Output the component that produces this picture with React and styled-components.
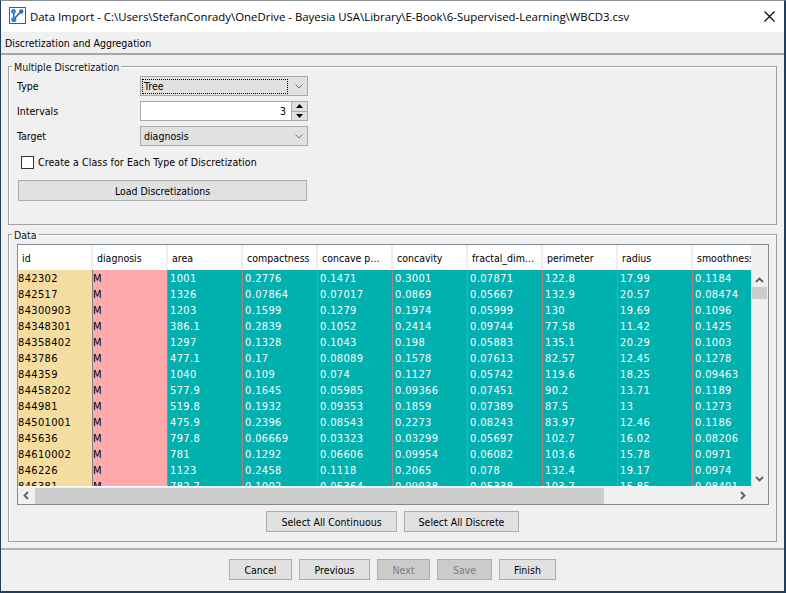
import React from "react";
import styled, { createGlobalStyle } from "styled-components";

const Global = createGlobalStyle`
  html, body { margin: 0; padding: 0; width: 786px; height: 593px; overflow: hidden; background: #f0f0f0; }
  * { box-sizing: border-box; }
`;
const font = `"Open Sans", "Liberation Sans", Arial, sans-serif`;
const uiFont = `"DejaVu Sans Condensed", "Liberation Sans", Arial, sans-serif`;

const Win = styled.div`
  width: 786px; height: 593px; display: flex; flex-direction: column;
  background: #f0f0f0; border: 1px solid #2b4a66; border-width: 1px 2px 2px 1px;
  border-color: #8a8f94 #1f3f5c #1f3f5c #1f3f5c;
  font-family: ${uiFont}; font-size: 10.5px; color: #000;
`;
const TitleBar = styled.div`
  height: 31px; background: #fff; display: flex; align-items: center; padding: 0 9px 0 8px; flex: none;
`;
const IconSlot = styled.div`display: flex; margin-bottom: 2px;`;
const TitleText = styled.div`
  font-family: ${font}; font-size: 11.4px; margin-left: 4px; flex: 1; white-space: nowrap; color: #000;
`;
const TabTitle = styled.div`
  height: 23px; flex: none; display: flex; align-items: center; padding: 1px 0 0 4px;
  border-bottom: 2px solid #a6a6a6;
`;
const Content = styled.div`
  flex: 1; padding: 5px 7px 0 7px; display: flex; flex-direction: column; gap: 3px;
`;
const Group = styled.fieldset`
  margin: 0; padding: 0; border: 1px solid #a0a0a0; box-shadow: inset 1px 1px 0 #fff;
  height: ${p => p.$h}px; min-width: 0; flex: none;
`;
const Legend = styled.legend`
  padding: 0 2px; margin-left: 3px; line-height: 12px; color: #111; position: relative; top: 1px;
`;
const Form = styled.div`
  padding: 4px 8px 0 8px; width: 310px;
`;
const FormRow = styled.div`
  display: grid; grid-template-columns: 123px 168px; align-items: center; height: 20px; margin-bottom: 5px;
`;
const Label = styled.div``;
const Combo = styled.div`
  height: 20px; border: 1px solid #a8a8a8; background: #e1e1e1; display: flex; align-items: center;
  justify-content: space-between; padding: 0 4px 0 1px;
`;
const ComboValue = styled.div`
  flex: 1; margin-right: 7px; height: 15px; line-height: 13px; padding-left: 1px;
  border: 1px dotted ${p => p.$focus ? "#000" : "transparent"};
`;
const Spinner = styled.div`
  height: 20px; border: 1px solid #a8a8a8; background: #fff; display: flex; justify-content: flex-end; align-items: stretch;
`;
const SpinValue = styled.div`flex: 1; text-align: right; padding-right: 5px; line-height: 18px;`;
const SpinBtns = styled.div`
  width: 16px; background: #e1e1e1; border-left: 1px solid #a8a8a8; display: flex; flex-direction: column;
  > div { flex: 1; display: flex; align-items: center; justify-content: center; }
  > div + div { border-top: 1px solid #a8a8a8; }
`;
const CheckRow = styled.div`
  display: flex; align-items: center; gap: 4px; height: 16px; margin: 8px 0 0 4px; letter-spacing: 0.1px; white-space: nowrap;
`;
const CheckBox = styled.div`width: 13px; height: 13px; border: 1px solid #333; background: #fff;`;
const Button = styled.div`
  height: 21px; width: ${p => p.$w}px; border: 1px solid #adadad;
  background: ${p => p.$disabled ? "#cbcbcb" : "#e1e1e1"}; color: ${p => p.$disabled ? "#7d7d7d" : "#000"};
  display: flex; align-items: center; justify-content: center; flex: none;
`;
const LoadWrap = styled.div`margin-top: 10px; margin-left: 1px;`;
const TableFrame = styled.div`
  margin: 4px 7px 0 8px; height: 261px; border: 1px solid #7f8a94;
  display: grid; grid-template-columns: 733px 17px; grid-template-rows: 25px 217px 17px; background: #f0f0f0;
`;
const HeaderRow = styled.div`
  display: flex; overflow: hidden; background: #fff; grid-column: 1;
`;
const HeaderCell = styled.div`
  flex: 0 0 75px; padding: 1px 0 0 4px; border-right: 2px solid #eeeeee; line-height: 24px; white-space: nowrap; overflow: hidden;
`;
const Corner = styled.div`background: #f0f0f0;`;
const Body = styled.div`overflow: hidden; grid-column: 1; border-bottom: 1px solid #fff;`;
const Row = styled.div`display: flex; height: 16px;`;
const Cell = styled.div`
  flex: 0 0 75px; height: 16px; line-height: 17px; font-size: 11px; letter-spacing: 0.35px; white-space: nowrap; overflow: hidden;
  padding-left: ${p => p.$kind === "num" ? 2 : 0}px;
  background: ${p => p.$kind === "id" ? "#f5dc9f" : p.$kind === "cat" ? "#ffa9ac" : "#00b1b0"};
  color: ${p => p.$kind === "num" ? "#fff" : "#000"};
  border-right: 1px solid ${p => p.$kind === "id" ? "#80808a" : "#b07f80"};
`;
const VBar = styled.div`
  grid-column: 2; grid-row: 2; background: #f0f0f0; display: flex; flex-direction: column; align-items: center; padding: 7px 0 5px;
`;
const VThumb = styled.div`width: 15px; height: 12px; background: #cdcdcd; margin-top: 4px;`;
const Spacer = styled.div`flex: 1;`;
const HBar = styled.div`
  grid-column: 1 / span 1; grid-row: 3; background: #f0f0f0; display: flex; align-items: center; padding: 0 5px;
`;
const HThumb = styled.div`width: 569px; height: 16px; background: #cdcdcd; margin-left: 6px;`;
const CenterButtons = styled.div`
  display: flex; justify-content: center; gap: 7px; margin-top: 6px;
`;
const Footer = styled.div`
  flex: none; height: 44px; border-top: 2px solid #b0b0b0; margin-top: 6px; display: flex; justify-content: center; align-items: center; gap: 7px;
  padding-bottom: 3px;
`;

const Chev = ({ d, w = 8, h = 5, c = "#707070", sw = 1 }) => (
  <svg width={w} height={h} viewBox={`0 0 ${w} ${h}`} fill="none"><path d={d} stroke={c} strokeWidth={sw} /></svg>
);
const Tri = ({ up }) => (
  <svg width="7" height="4" viewBox="0 0 7 4"><path d={up ? "M3.5 0L7 4H0Z" : "M0 0H7L3.5 4Z"} fill="#000" /></svg>
);

const headers = ["id","diagnosis","area","compactness","concave p…","concavity","fractal_dim…","perimeter","radius","smoothness"];
const rows = `842302 M 1001 0.2776 0.1471 0.3001 0.07871 122.8 17.99 0.1184
842517 M 1326 0.07864 0.07017 0.0869 0.05667 132.9 20.57 0.08474
84300903 M 1203 0.1599 0.1279 0.1974 0.05999 130 19.69 0.1096
84348301 M 386.1 0.2839 0.1052 0.2414 0.09744 77.58 11.42 0.1425
84358402 M 1297 0.1328 0.1043 0.198 0.05883 135.1 20.29 0.1003
843786 M 477.1 0.17 0.08089 0.1578 0.07613 82.57 12.45 0.1278
844359 M 1040 0.109 0.074 0.1127 0.05742 119.6 18.25 0.09463
84458202 M 577.9 0.1645 0.05985 0.09366 0.07451 90.2 13.71 0.1189
844981 M 519.8 0.1932 0.09353 0.1859 0.07389 87.5 13 0.1273
84501001 M 475.9 0.2396 0.08543 0.2273 0.08243 83.97 12.46 0.1186
845636 M 797.8 0.06669 0.03323 0.03299 0.05697 102.7 16.02 0.08206
84610002 M 781 0.1292 0.06606 0.09954 0.06082 103.6 15.78 0.0971
846226 M 1123 0.2458 0.1118 0.2065 0.078 132.4 19.17 0.0974
846381 M 782.7 0.1002 0.05364 0.09938 0.05338 103.7 15.85 0.08401`.split("\n").map(r => r.split(" "));

const AppIcon = () => (
  <svg width="17" height="17" viewBox="0 0 17 17">
    <rect x="0.5" y="0.5" width="16" height="16" fill="#fff" stroke="#1f5fc4" />
    <path d="M4.5 12.5L5 5M5 12L12 4.5" stroke="#1c4fa8" strokeWidth="1.4" fill="none" />
    <circle cx="4.5" cy="4.5" r="2.4" fill="#1e88e5" />
    <circle cx="12.2" cy="4.5" r="2.2" fill="#1e6fd0" />
    <circle cx="4.8" cy="12.5" r="2.6" fill="#1e88e5" />
  </svg>
);
const CloseIcon = () => (
  <svg width="11" height="11" viewBox="0 0 11 11"><path d="M0.5 0.5L10.5 10.5M10.5 0.5L0.5 10.5" stroke="#000" strokeWidth="1.1" /></svg>
);

export default function App() {
  return (
    <Win>
      <Global />
      <TitleBar>
        <IconSlot><AppIcon /></IconSlot>
        <TitleText>Data Import - C:\Users\StefanConrady\OneDrive - Bayesia USA\Library\E-Book\6-Supervised-Learning\WBCD3.csv</TitleText>
        <CloseIcon />
      </TitleBar>
      <TabTitle>Discretization and Aggregation</TabTitle>
      <Content>
        <Group $h={165}>
          <Legend>Multiple Discretization</Legend>
          <Form>
            <FormRow>
              <Label>Type</Label>
              <Combo><ComboValue $focus>Tree</ComboValue><Chev d="M0.5 0.5L4 4L7.5 0.5" /></Combo>
            </FormRow>
            <FormRow>
              <Label>Intervals</Label>
              <Spinner><SpinValue>3</SpinValue><SpinBtns><div><Tri up /></div><div><Tri /></div></SpinBtns></Spinner>
            </FormRow>
            <FormRow>
              <Label>Target</Label>
              <Combo><ComboValue>diagnosis</ComboValue><Chev d="M0.5 0.5L4 4L7.5 0.5" /></Combo>
            </FormRow>
            <CheckRow><CheckBox />Create a Class for Each Type of Discretization</CheckRow>
            <LoadWrap><Button $w={289}>Load Discretizations</Button></LoadWrap>
          </Form>
        </Group>
        <Group $h={314}>
          <Legend>Data</Legend>
          <TableFrame>
            <HeaderRow>{headers.map(h => <HeaderCell key={h}>{h}</HeaderCell>)}</HeaderRow>
            <Corner />
            <Body>
              {rows.map(r => (
                <Row key={r[0]}>
                  {r.map((v, i) => <Cell key={i} $kind={i === 0 ? "id" : i === 1 ? "cat" : "num"}>{v}</Cell>)}
                </Row>
              ))}
            </Body>
            <VBar>
              <Chev d="M1 5L4.5 1.5L8 5" w={9} h={6} sw={1.8} c="#606060" />
              <VThumb />
              <Spacer />
              <Chev d="M1 1L4.5 4.5L8 1" w={9} h={6} sw={1.8} c="#606060" />
            </VBar>
            <HBar>
              <Chev d="M5 1L1.5 4.5L5 8" w={6} h={9} sw={1.8} c="#606060" />
              <HThumb />
              <Spacer />
              <Chev d="M1 1L4.5 4.5L1 8" w={6} h={9} sw={1.8} c="#606060" />
            </HBar>
            <Corner />
          </TableFrame>
          <CenterButtons>
            <Button $w={131}>Select All Continuous</Button>
            <Button $w={115}>Select All Discrete</Button>
          </CenterButtons>
        </Group>
      </Content>
      <Footer>
        <Button $w={63}>Cancel</Button>
        <Button $w={71}>Previous</Button>
        <Button $w={53} $disabled>Next</Button>
        <Button $w={55} $disabled>Save</Button>
        <Button $w={57}>Finish</Button>
      </Footer>
    </Win>
  );
}
